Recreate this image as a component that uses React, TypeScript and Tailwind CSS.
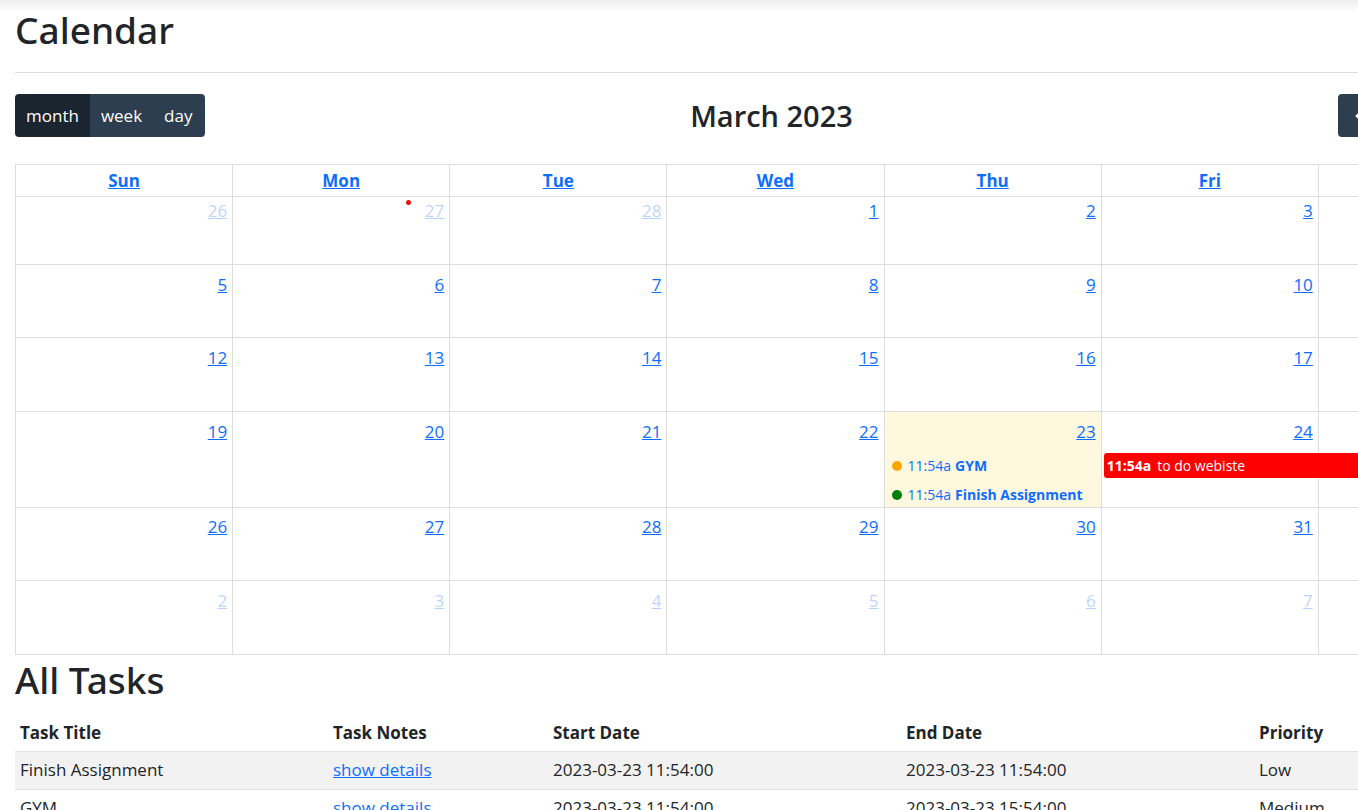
import React from "react";

const FONT = { fontFamily: '"Open Sans", "Noto Sans", sans-serif' };
const NOTO = { fontFamily: '"Noto Sans", "Open Sans", sans-serif' };

type Ev = { dot?: string; title: string; bar?: boolean };

const weeks: { d: number; other?: boolean; today?: boolean; ev?: Ev[] }[][] = [
  [{ d: 26, other: true }, { d: 27, other: true }, { d: 28, other: true }, { d: 1 }, { d: 2 }, { d: 3 }, { d: 4 }],
  [{ d: 5 }, { d: 6 }, { d: 7 }, { d: 8 }, { d: 9 }, { d: 10 }, { d: 11 }],
  [{ d: 12 }, { d: 13 }, { d: 14 }, { d: 15 }, { d: 16 }, { d: 17 }, { d: 18 }],
  [
    { d: 19 },
    { d: 20 },
    { d: 21 },
    { d: 22 },
    {
      d: 23,
      today: true,
      ev: [
        { dot: "bg-[#ffa500]", title: "GYM" },
        { dot: "bg-[#008000]", title: "Finish Assignment" },
      ],
    },
    { d: 24, ev: [{ title: "to do webiste", bar: true }] },
    { d: 25 },
  ],
  [{ d: 26 }, { d: 27 }, { d: 28 }, { d: 29 }, { d: 30 }, { d: 31 }, { d: 1, other: true }],
  [{ d: 2, other: true }, { d: 3, other: true }, { d: 4, other: true }, { d: 5, other: true }, { d: 6, other: true }, { d: 7, other: true }, { d: 8, other: true }],
];

const rowHeights = ["h-[68px]", "h-[73px]", "h-[74px]", "h-[95px]", "h-[74px]", "h-[74px]"];
const days = ["Sun", "Mon", "Tue", "Wed", "Thu", "Fri", "Sat"];

const tasks = [
  ["Finish Assignment", "2023-03-23 11:54:00", "2023-03-23 11:54:00", "Low"],
  ["GYM", "2023-03-23 11:54:00", "2023-03-23 15:54:00", "Medium"],
];

export default function App() {
  return (
    <div className="relative w-[1358px] h-[810px] overflow-hidden bg-white text-[#212529]" style={FONT}>
      <div className="pointer-events-none absolute left-0 top-0 h-[12px] w-full bg-gradient-to-b from-[#ececec] to-white/0" />
      <div className="w-[1551px] px-[15px]">
        <h1 className="mt-[6px] text-[37px] leading-[48px] font-medium" style={NOTO}>
          Calendar
        </h1>
        <hr className="mt-[18px] border-t border-[#dfdfdf]" />
        {/* toolbar */}
        <div className="mt-[21px] flex items-center justify-between">
          <div className="flex w-[190px] overflow-hidden rounded-[4px] text-[17px] text-white">
            <div className="flex h-[43px] items-center bg-[#1a252f] px-[11px]">month</div>
            <div className="flex h-[43px] items-center bg-[#2c3e50] pl-[11px] pr-[11px]">week</div>
            <div className="flex h-[43px] flex-1 items-center bg-[#2c3e50] pl-[11px] pr-[11px]">day</div>
          </div>
          <div className="text-[29px] font-semibold leading-[40px] text-[#212529]">March 2023</div>
          <div className="flex w-[198px] items-center text-white">
            <div className="flex overflow-hidden rounded-[4px]">
              <div className="flex h-[43px] w-[44px] items-center justify-center bg-[#2c3e50]">
                <svg width="16" height="16" viewBox="0 0 16 16" fill="none" stroke="white" strokeWidth="2.5">
                  <path d="M10 3 L5 8 L10 13" />
                </svg>
              </div>
              <div className="flex h-[43px] w-[44px] items-center justify-center border-l border-[#1e2b37] bg-[#2c3e50]">
                <svg width="16" height="16" viewBox="0 0 16 16" fill="none" stroke="white" strokeWidth="2.5">
                  <path d="M6 3 L11 8 L6 13" />
                </svg>
              </div>
            </div>
            <div className="ml-[13px] flex h-[43px] flex-1 items-center justify-center rounded-[4px] bg-[#2c3e50] text-[17px]">
              today
            </div>
          </div>
        </div>

        {/* calendar grid */}
        <div className="mt-[27px] w-[1521px] border-l border-t border-[#dddddd]">
          <div className="grid grid-cols-7">
            {days.map((d) => (
              <div key={d} className="flex h-[32px] items-center justify-center border-b border-r border-[#dddddd]">
                <span className="text-[17px] font-bold text-[#0d6efd] underline">{d}</span>
              </div>
            ))}
          </div>
          {weeks.map((w, wi) => (
            <div key={wi} className={`grid grid-cols-7 ${rowHeights[wi]}`}>
              {w.map((c, ci) => (
                <div
                  key={ci}
                  className={`relative border-b border-r border-[#dddddd] ${c.today ? "bg-[#fef8df]" : ""}`}
                >
                  {wi === 0 && ci === 1 && (
                    <div className="absolute left-[173px] top-[3px] h-[5px] w-[5px] rounded-full bg-[#e81010]" />
                  )}
                  <div className={`flex justify-end pr-[5px] ${wi === 0 ? "pt-[2px]" : "pt-[8px]"}`}>
                    <span
                      className={`text-[17px] leading-[24px] underline ${c.other ? "text-[#0d6efd]/30" : "text-[#0d6efd]"}`}
                    >
                      {c.d}
                    </span>
                  </div>
                  {c.ev && (
                    <div className="mt-[9px] flex flex-col gap-[4px]">
                      {c.ev.map((e, ei) =>
                        e.bar ? (
                          <div
                            key={ei}
                            className="relative z-10 ml-[2px] flex h-[25px] w-[420px] items-center rounded-l-[3px] bg-[#ff0000] pl-[3px] text-[14px] text-white"
                          >
                            <span className="font-bold">11:54a</span>
                            <span className="ml-[6px]">{e.title}</span>
                          </div>
                        ) : (
                          <div key={ei} className="flex h-[25px] items-center pl-[7px] text-[14px] text-[#0d6efd]">
                            <span className={`h-[10px] w-[10px] rounded-full ${e.dot}`} />
                            <span className="ml-[6px]">11:54a</span>
                            <span className="ml-[4px] font-bold">{e.title}</span>
                          </div>
                        )
                      )}
                    </div>
                  )}
                </div>
              ))}
            </div>
          ))}
        </div>

        {/* tasks */}
        <h1 className="mt-[1px] mb-[10px] text-[37px] font-medium leading-[48px]" style={NOTO}>
          All Tasks
        </h1>
        <table className="w-[1521px] border-collapse text-[17px]">
          <thead>
            <tr className="h-[37px] border-b border-[#dee2e6]">
              <th className="w-[313px] px-[5px] text-left font-bold">Task Title</th>
              <th className="w-[220px] px-[5px] text-left font-bold">Task Notes</th>
              <th className="w-[353px] px-[5px] text-left font-bold">Start Date</th>
              <th className="w-[353px] px-[5px] text-left font-bold">End Date</th>
              <th className="px-[5px] text-left font-bold">Priority</th>
            </tr>
          </thead>
          <tbody>
            {tasks.map((t, i) => (
              <tr key={i} className={`h-[38px] border-b border-[#dee2e6] ${i % 2 === 0 ? "bg-[#f2f2f2]" : ""}`}>
                <td className="px-[5px]">{t[0]}</td>
                <td className="px-[5px]">
                  <span className="text-[#0d6efd] underline">show details</span>
                </td>
                <td className="px-[5px]">{t[1]}</td>
                <td className="px-[5px]">{t[2]}</td>
                <td className="px-[5px]">{t[3]}</td>
              </tr>
            ))}
          </tbody>
        </table>
      </div>
    </div>
  );
}
